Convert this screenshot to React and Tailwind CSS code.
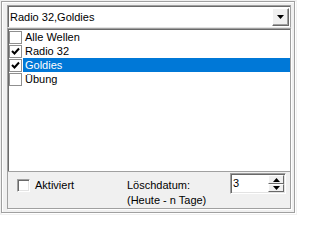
import React from "react";

const Check = () => (
  <svg width="9" height="9" viewBox="0 0 9 9" className="block">
    <path d="M1 4 L3.5 6.5 L8 1.5" stroke="#000" strokeWidth="2" fill="none" />
  </svg>
);

function ListBox({ checked }) {
  return (
    <div className="w-[13px] h-[13px] border border-[#8f8f8f] bg-white flex items-center justify-center shrink-0">
      {checked ? <Check /> : null}
    </div>
  );
}

function Row({ label, checked, selected }) {
  return (
    <div className="h-[14px] flex items-center pl-px">
      <ListBox checked={checked} />
      <div
        className={
          selected
            ? "ml-px h-[14px] flex-1 flex items-center pl-[2px] bg-[#0078d7] text-white"
            : "ml-px h-[14px] flex-1 flex items-center pl-[2px] text-black"
        }
      >
        {label}
      </div>
    </div>
  );
}

export default function App() {
  return (
    <div
      className="w-[297px] h-[215px] bg-[#f0f0f0] pt-px pl-px text-[11px] leading-[13px] text-black"
      style={{ fontFamily: '"Liberation Sans", Arial, sans-serif' }}
    >
      <div className="w-[294px] h-[212px] border border-[#a0a0a0] shadow-[inset_1px_1px_0_#fff,1px_1px_0_#fff] pt-[3px] pl-[5px] flex flex-col">
        {/* Combo */}
        <div className="w-[284px] h-[23px] border border-t-[#a0a0a0] border-l-[#a0a0a0] border-r-[#a0a0a0] border-b-[#e3e3e3] shadow-[inset_1px_1px_0_#696969] bg-white flex items-center">
          <div className="flex-1 pl-[2px] pt-px">Radio 32,Goldies</div>
          <div className="w-[17px] h-[18px] mr-px bg-[#f0f0f0] border border-t-white border-l-white border-r-[#696969] border-b-[#696969] shadow-[inset_-1px_-1px_0_#a0a0a0] flex items-center justify-center">
            <svg width="7" height="4" viewBox="0 0 7 4" className="block">
              <path d="M0 0 H7 L3.5 4 Z" fill="#000" />
            </svg>
          </div>
        </div>
        {/* Inner frame */}
        <div className="w-[284px] h-[181px] border border-[#a0a0a0] shadow-[1px_1px_0_#fff] flex flex-col">
          <div className="h-[143px] bg-white border-b border-[#a0a0a0] shadow-[inset_1px_1px_0_#696969] pt-px">
            <Row label="Alle Wellen" />
            <Row label="Radio 32" checked />
            <Row label="Goldies" checked selected />
            <Row label="Übung" />
          </div>
          <div className="flex-1 flex items-start pl-[9px]">
            <div className="w-[110px] mt-[7px] flex items-center">
              <div className="w-[13px] h-[13px] border border-t-[#a0a0a0] border-l-[#a0a0a0] border-r-white border-b-white shadow-[inset_1px_1px_0_#696969,inset_-1px_-1px_0_#e3e3e3] bg-white" />
              <span className="ml-[5px]">Aktiviert</span>
            </div>
            <div className="w-[103px] mt-[6px] leading-[15px]">
              <div>Löschdatum:</div>
              <div>(Heute - n Tage)</div>
            </div>
            <div className="mt-px w-[56px] h-[21px] border border-t-[#a0a0a0] border-l-[#a0a0a0] border-r-white border-b-white shadow-[inset_1px_1px_0_#696969,inset_-1px_-1px_0_#e3e3e3] bg-white flex items-start">
              <div className="flex-1 pl-[2px] pt-[3px]">3</div>
              <div className="w-[16px] h-[17px] mt-px mr-px flex flex-col">
                <div className="h-[9px] bg-[#f0f0f0] border border-t-white border-l-white border-r-[#696969] border-b-[#696969] flex items-center justify-center">
                  <svg width="7" height="4" viewBox="0 0 7 4" className="block">
                    <path d="M0 4 H7 L3.5 0 Z" fill="#000" />
                  </svg>
                </div>
                <div className="h-[8px] bg-[#f0f0f0] border border-t-white border-l-white border-r-[#696969] border-b-[#696969] flex items-center justify-center">
                  <svg width="7" height="4" viewBox="0 0 7 4" className="block">
                    <path d="M0 0 H7 L3.5 4 Z" fill="#000" />
                  </svg>
                </div>
              </div>
            </div>
          </div>
        </div>
      </div>
    </div>
  );
}
